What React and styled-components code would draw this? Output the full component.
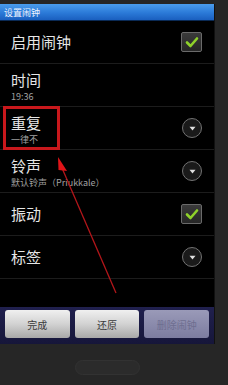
import styled, { createGlobalStyle } from "styled-components";

const GlobalStyle = createGlobalStyle`
   html, body {
      margin: 0;
      padding: 0;
      background: #252525;
   }
   * {
      box-sizing: border-box;
   }
`;

const Frame = styled.div`
   position: relative;
   width: 228px;
   height: 385px;
   overflow: hidden;
   background: #262626;
   font-family: "Noto Sans CJK SC", "Noto Sans", sans-serif;
   padding-top: 4px;
   display: flex;
   flex-direction: column;
`;

const Screen = styled.div`
   width: 215px;
   background: #000;
   display: flex;
   flex-direction: column;
   border-right: 1px solid #111;
`;

const TitleBar = styled.div`
   height: 17px;
   display: flex;
   align-items: center;
   padding-left: 4px;
   font-size: 9px;
   color: #eef4ff;
   background: linear-gradient(#4a9cec, #2b7ad8 55%, #1a5fbf);
   border-bottom: 1px solid #0a2a55;
`;

const Row = styled.div`
   height: 43px;
   display: flex;
   align-items: center;
   justify-content: space-between;
   padding: 0 12px 0 11px;
   border-bottom: 1px solid #1c1c1c;
`;

const Labels = styled.div`
   display: flex;
   flex-direction: column;
   gap: ${(p) => (p.$sub ? "2px" : "0")};
   padding-top: ${(p) => (p.$sub ? "3px" : "0")};
`;

const Title = styled.div`
   font-size: 15px;
   line-height: 18px;
   color: #e6e6e6;
`;

const Sub = styled.div`
   font-size: 9px;
   line-height: 11px;
   color: #a0a0a0;
`;

const Check = styled.div`
   width: 21px;
   height: 20px;
   border: 1px solid #6a6a6a;
   border-radius: 2px;
   background: linear-gradient(#3a3a3a, #262626);
   display: flex;
   align-items: center;
   justify-content: center;
`;

const Drop = styled.div`
   width: 20px;
   height: 20px;
   border-radius: 50%;
   border: 1.2px solid #727272;
   background: #1a1a1a;
   display: flex;
   align-items: center;
   justify-content: center;
`;

const Spacer = styled.div`
   height: 28px;
`;

const ButtonBar = styled.div`
   height: 37px;
   padding: 3px 5px 6px;
   display: flex;
   gap: 5px;
   background: linear-gradient(#20204e, #16163a);
`;

const Button = styled.div`
   flex: 1;
   border-radius: 3px;
   display: flex;
   align-items: center;
   justify-content: center;
   font-size: 10px;
   color: ${(p) => (p.$disabled ? "#6e6e90" : "#3a3a3a")};
   background: ${(p) =>
      p.$disabled
         ? "linear-gradient(#9a9ab8, #7c7ca0)"
         : "linear-gradient(#f0f0f0, #d2d2d2 50%, #a8a8a8)"};
`;

const Pill = styled.div`
   margin: 16px 0 0 75px;
   width: 65px;
   height: 15px;
   border-radius: 8px;
   background: #2b2b2b;
   border: 1px solid #323232;
`;

const Highlight = styled.div`
   position: absolute;
   left: 3px;
   top: 106px;
   width: 57px;
   height: 44px;
   border: 3px solid #c8181c;
`;

const Arrow = styled.svg`
   position: absolute;
   left: 0;
   top: 0;
   pointer-events: none;
`;

function CheckBox() {
   return (
      <Check>
         <svg width="14" height="12" viewBox="0 0 14 12">
            <path
               d="M2 6.5 L5.5 10 L12 2.5"
               fill="none"
               stroke="#8fd22a"
               strokeWidth="2.6"
               strokeLinecap="round"
               strokeLinejoin="round"
            />
         </svg>
      </Check>
   );
}

function DropDown() {
   return (
      <Drop>
         <svg width="7" height="5" viewBox="0 0 7 5">
            <path d="M0.5 0.8 L6.5 0.8 L3.5 4.5 Z" fill="#e0e0e0" />
         </svg>
      </Drop>
   );
}

const rows = [
   { title: "启用闹钟", control: "check" },
   { title: "时间", sub: "19:36" },
   { title: "重复", sub: "一律不", control: "drop" },
   { title: "铃声", sub: "默认铃声（Priukkale）", control: "drop" },
   { title: "振动", control: "check" },
   { title: "标签", control: "drop" },
];

export default function App() {
   return (
      <>
         <GlobalStyle />
         <Frame>
            <Screen>
               <TitleBar>设置闹钟</TitleBar>
               {rows.map((r) => (
                  <Row key={r.title}>
                     <Labels $sub={!!r.sub}>
                        <Title>{r.title}</Title>
                        {r.sub && <Sub>{r.sub}</Sub>}
                     </Labels>
                     {r.control === "check" && <CheckBox />}
                     {r.control === "drop" && <DropDown />}
                  </Row>
               ))}
               <Spacer />
               <ButtonBar>
                  <Button>完成</Button>
                  <Button>还原</Button>
                  <Button $disabled>删除闹钟</Button>
               </ButtonBar>
            </Screen>
            <Pill />
            <Highlight />
            <Arrow width="228" height="385" viewBox="0 0 228 385">
               <line x1="116" y1="293" x2="62" y2="168" stroke="#b3161a" strokeWidth="1.3" />
               <path d="M58 157 L67 171 L58.5 170 Z" fill="#e01418" />
            </Arrow>
         </Frame>
      </>
   );
}
